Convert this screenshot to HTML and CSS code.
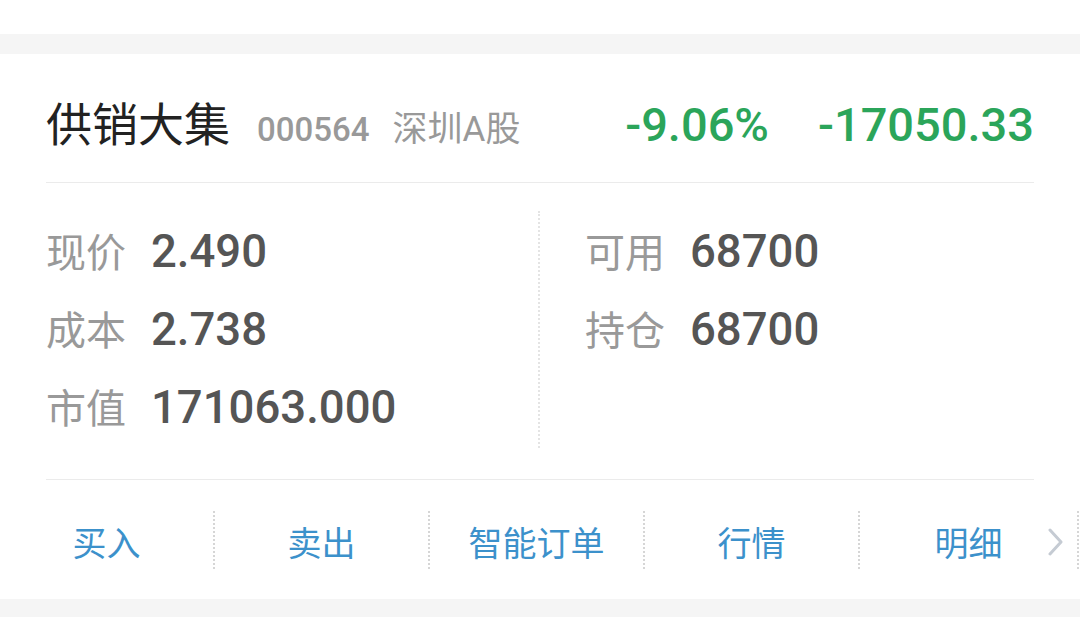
FILE: index.html
```html
<!DOCTYPE html>
<html lang="zh-CN">
<head>
<meta charset="utf-8">
<link rel="stylesheet" href="styles.css">
</head>
<body>
<div class="prev-card"></div>
<section class="card">
  <header class="head">
    <span class="title">供销大集</span>
    <span class="code">000564</span>
    <span class="market">深圳A股</span>
    <span class="pct">-9.06%</span>
    <span class="amount">-17050.33</span>
  </header>
  <div class="info">
    <div class="col col-left">
      <div class="row"><span class="label">现价</span><span class="value">2.490</span></div>
      <div class="row"><span class="label">成本</span><span class="value">2.738</span></div>
      <div class="row"><span class="label">市值</span><span class="value">171063.000</span></div>
    </div>
    <div class="col col-right">
      <div class="row"><span class="label">可用</span><span class="value">68700</span></div>
      <div class="row"><span class="label">持仓</span><span class="value">68700</span></div>
    </div>
  </div>
  <nav class="actions">
    <a class="act">买入</a>
    <a class="act">卖出</a>
    <a class="act">智能订单</a>
    <a class="act">行情</a>
    <a class="act act-last">明细</a>
    <svg class="more" width="16" height="28" viewBox="0 0 16 28"><polyline points="2,2 13,14 2,26" fill="none" stroke="#c5cbd3" stroke-width="3" stroke-linecap="round" stroke-linejoin="round"/></svg>
  </nav>
</section>
</body>
</html>
```
FILE: styles.css
```css
html, body {
  margin: 0;
  padding: 0;
}
body {
  background: #f5f5f5;
  width: 1080px;
  height: 617px;
  overflow: hidden;
  font-family: Roboto, "Noto Sans CJK SC", sans-serif;
}
.prev-card {
  height: 34px;
  background: #fff;
}
.card {
  margin-top: 20px;
  background: #fff;
  padding: 0 46px;
  height: 545px;
  box-sizing: border-box;
  position: relative;
}
.head {
  display: flex;
  align-items: baseline;
  height: 129px;
  box-sizing: border-box;
  padding-top: 44px;
  border-bottom: 1px solid #ebebeb;
}
.title {
  font-family: "Noto Sans CJK SC", sans-serif;
  font-size: 46px;
  line-height: 1;
  color: #222;
}
.code {
  font-size: 33px;
  font-weight: 500;
  line-height: 1;
  color: #999;
  margin-left: 27px;
}
.market {
  font-family: Roboto, "Noto Sans CJK SC", sans-serif;
  font-size: 35px;
  line-height: 1;
  color: #999;
  margin-left: 23px;
}
.pct, .amount {
  font-size: 47px;
  font-weight: 500;
  line-height: 1;
  color: #2ba55a;
}
.pct {
  margin-left: auto;
}
.amount {
  margin-left: 49px;
}
.info {
  display: flex;
  padding: 28px 0 31px;
  border-bottom: 1px solid #ebebeb;
}
.col {
  box-sizing: border-box;
}
.col-left {
  width: 494px;
  border-right: 2px dotted #e4e4e4;
  padding-bottom: 3px;
}
.col-right {
  padding-left: 45px;
}
.row {
  display: flex;
  align-items: baseline;
  height: 78px;
  line-height: 78px;
}
.label {
  font-family: "Noto Sans CJK SC", sans-serif;
  font-size: 40px;
  color: #999;
}
.value {
  font-size: 45.5px;
  font-weight: 500;
  color: #555;
  margin-left: 25px;
}
.actions {
  display: flex;
  align-items: center;
  height: 120px;
  margin: 0 -46px;
  position: relative;
}
.act {
  width: 215px;
  height: 58px;
  display: flex;
  align-items: center;
  justify-content: center;
  padding-top: 2px;
  box-sizing: border-box;
  font-family: "Noto Sans CJK SC", sans-serif;
  font-size: 34px;
  color: #3c91cb;
  border-right: 2px dotted #d6d6d6;
}
.act-last {
  width: 219px;
}
.more {
  position: absolute;
  left: 1048px;
  top: 48px;
}
```
